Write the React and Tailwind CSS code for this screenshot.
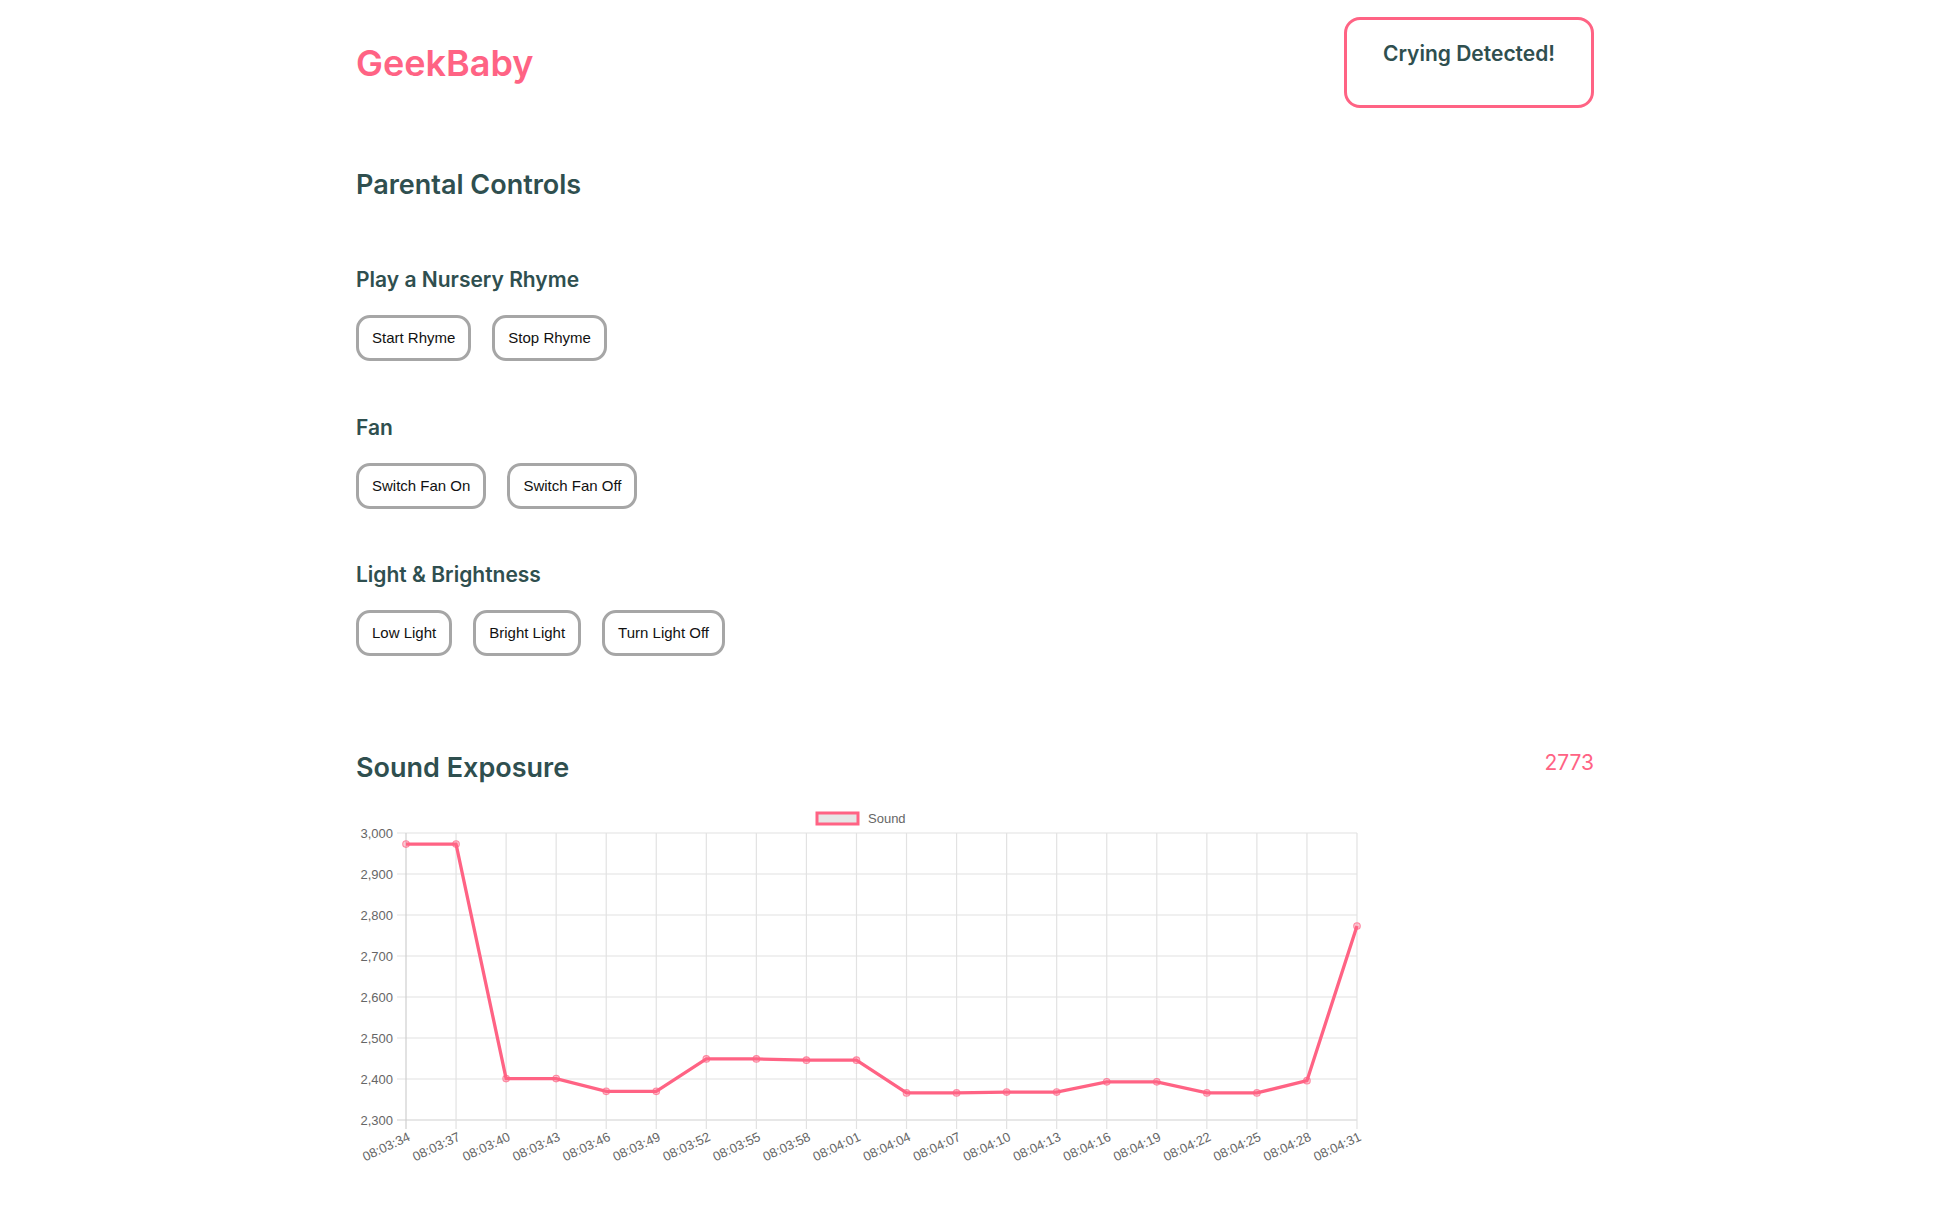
import React from "react";

const labels = [
  "08:03:34", "08:03:37", "08:03:40", "08:03:43", "08:03:46", "08:03:49", "08:03:52",
  "08:03:55", "08:03:58", "08:04:01", "08:04:04", "08:04:07", "08:04:10", "08:04:13",
  "08:04:16", "08:04:19", "08:04:22", "08:04:25", "08:04:28", "08:04:31",
];
const values = [
  2973, 2973, 2401, 2401, 2370, 2370, 2449, 2449, 2446, 2446,
  2366, 2366, 2368, 2368, 2393, 2393, 2366, 2366, 2396, 2773,
];

const Button = ({ children }) => (
  <button className="h-[46px] px-[13px] border-[3px] border-[#a6a6a6] rounded-[14px] bg-white text-[15px] text-[#111] font-['Liberation_Sans',Arial,sans-serif]">
    {children}
  </button>
);

const Section = ({ title, buttons, className }) => (
  <div className={className}>
    <h3 className="text-[21px] leading-none font-semibold text-[#2f4f4f]">{title}</h3>
    <div className="flex gap-[21px] mt-[25px]">
      {buttons.map((b) => (
        <Button key={b}>{b}</Button>
      ))}
    </div>
  </div>
);

const SoundChart = () => {
  const left = 50;
  const right = 1001;
  const top = 34;
  const bottom = 321;
  const stepX = (right - left) / (labels.length - 1);
  const yOf = (v) => bottom - ((v - 2300) / 700) * (bottom - top);
  const ticks = [3000, 2900, 2800, 2700, 2600, 2500, 2400, 2300];
  const pts = values.map((v, i) => [left + i * stepX, yOf(v)]);

  return (
    <svg width="1008" height="380" className="block" fontFamily="'Liberation Sans', Arial, sans-serif">
      {/* legend */}
      <rect x="461" y="14" width="41" height="11" fill="#e6e6e6" stroke="#ff6384" strokeWidth="3" />
      <text x="512" y="24" fontSize="13" fill="#666">Sound</text>

      {/* horizontal grid */}
      {ticks.map((t) => (
        <g key={t}>
          <line x1={left - 9} x2={right} y1={yOf(t)} y2={yOf(t)} stroke={t === 2300 ? "#cfcfcf" : "#e2e2e2"} strokeWidth="1.2" />
          <text x="37" y={yOf(t) + 4.5} fontSize="13" fill="#666" textAnchor="end">
            {t.toLocaleString("en-US")}
          </text>
        </g>
      ))}

      {/* vertical grid + labels */}
      {labels.map((l, i) => {
        const x = left + i * stepX;
        return (
          <g key={l}>
            <line x1={x} x2={x} y1={top} y2={bottom + 9} stroke={i === 0 ? "#cfcfcf" : "#e2e2e2"} strokeWidth="1.2" />
            <text
              fontSize="13"
              fill="#666"
              textAnchor="end"
              transform={`translate(${x + 5},${bottom + 20}) rotate(-25)`}
            >
              {l}
            </text>
          </g>
        );
      })}

      <polyline
        points={pts.map((p) => p.join(",")).join(" ")}
        fill="none"
        stroke="#ff6384"
        strokeWidth="3.3"
        strokeLinejoin="miter"
      />
      {pts.map((p, i) => (
        <circle key={i} cx={p[0]} cy={p[1]} r="3.3" fill="rgba(255,99,132,0.35)" stroke="#ff6384" strokeOpacity="0.7" strokeWidth="1.1" />
      ))}
    </svg>
  );
};

export default function App() {
  return (
    <div className="min-h-screen bg-white font-['Inter','Noto_Sans',sans-serif]">
      <div className="w-[1238px] ml-[356px] pt-[17px] pb-10 flex flex-col">
        <div className="flex justify-between items-start">
          <h1 className="mt-[28px] text-[36px] leading-none font-semibold text-[#ff6384]">GeekBaby</h1>
          <div className="w-[250px] h-[91px] border-[3px] border-[#ff6384] rounded-[16px] flex justify-center pt-[23px]">
            <h3 className="text-[21px] leading-none font-semibold text-[#2f4f4f]">Crying Detected!</h3>
          </div>
        </div>

        <h2 className="mt-[63px] text-[27px] leading-none font-semibold text-[#2f4f4f]">Parental Controls</h2>

        <Section className="mt-[71px]" title="Play a Nursery Rhyme" buttons={["Start Rhyme", "Stop Rhyme"]} />
        <Section className="mt-[56px]" title="Fan" buttons={["Switch Fan On", "Switch Fan Off"]} />
        <Section className="mt-[55px]" title="Light & Brightness" buttons={["Low Light", "Bright Light", "Turn Light Off"]} />

        <div className="mt-[98px] flex justify-between items-start">
          <h2 className="text-[27px] leading-none font-semibold text-[#2f4f4f]">Sound Exposure</h2>
          <span className="-mt-[2px] text-[21px] leading-none text-[#ff6384]">2773</span>
        </div>

        <div className="mt-[18px]">
          <SoundChart />
        </div>
      </div>
    </div>
  );
}
